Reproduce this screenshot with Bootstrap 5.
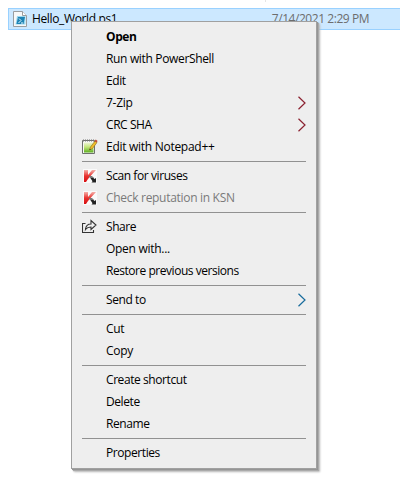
<!DOCTYPE html>
<html lang="en">
<head>
<meta charset="utf-8">
<title>File context menu</title>
<link href="https://cdn.jsdelivr.net/npm/bootstrap@5.3.0/dist/css/bootstrap.min.css" rel="stylesheet">
<style>
body{width:400px;height:492px;overflow:hidden;background:#fff;font:12px/22px "Open Sans","Noto Sans",sans-serif;color:#000}
.column-tick{width:1px;height:2px;background:#e5e5e5;margin-left:265px}
.file-row{height:22px;margin:6px 0 0 8px;background:#cce8ff;border:1px solid #99d1ff;border-right:0;padding-left:4px;line-height:20px}
.file-name{margin-left:5px;letter-spacing:-.36px}
.file-date{margin-right:31px;color:#6d6d6d;letter-spacing:-.45px}
.context-menu{left:71px;top:21px;width:246px;height:448px;padding:4px 10px;margin:0;background:#eee;border:1px solid #a0a0a0;border-radius:0;box-shadow:1px 1px 0 #959595,2px 2px 1px #aaa,3px 3px 2px #bbb;font-size:12px;color:#000;min-width:0}
.menu-row{height:22px}
.icon-slot{width:24px;height:22px;flex:none}
.icon-slot svg{display:block;margin-top:3px}
.menu-line{height:1px;margin:3px 0;background:#919191}
.label-text{letter-spacing:-.42px;white-space:nowrap}
.fit-normal{letter-spacing:-.34px}
.fit-snug{letter-spacing:-.46px}
.fit-wide{letter-spacing:-.28px}
.off{color:#7a7a7a;letter-spacing:-.3px}
.arrow{margin-right:0}
</style>
<script src="https://cdn.jsdelivr.net/npm/bootstrap@5.3.0/dist/js/bootstrap.bundle.min.js"></script>
</head>
<body>
<svg width="0" height="0" class="position-absolute">
<defs><linearGradient id="red" x2="0" y2="1"><stop stop-color="#f5b0aa"/><stop offset=".5" stop-color="#e8312e"/><stop offset="1" stop-color="#d80f12"/></linearGradient>
<linearGradient id="green" x2="0" y2="1"><stop stop-color="#eef6d8"/><stop offset=".45" stop-color="#c4e67a"/><stop offset="1" stop-color="#5cae20"/></linearGradient></defs>
<symbol id="shield" viewBox="0 0 16 16"><path fill="#fafafa" d="M1 1h14v14H1z"/><path fill="url(#red)" d="M2 2h4v5l4-5h4L8.500 8 6 11l-2 3H2z"/><path fill="#222" d="M8 9.500h3l1.500 1.500L14 10v4.500H9.500l1-1.200L9 11z"/><path fill="#777" d="M6.500 8h3.500l2 2H8z"/></symbol>
<symbol id="chev" viewBox="0 0 9 14"><path d="M1.500 .8L8 7 1.500 13.200" fill="none" stroke="currentColor" stroke-width="1.200"/></symbol>
</svg>
<div class="column-tick"></div>
<div class="file-row d-flex align-items-center">
<svg width="14" height="16" viewBox="0 0 14 16"><path d="M.5.5h9l4 4v11H.5z" fill="#f7f8f8" stroke="#9a9d9f"/><path d="M9.500.5v4h4" fill="#fff" stroke="#9a9d9f"/><path d="M4 5h8.500v8.500H2.500z" fill="#9cd7ef"/><path d="M5 6h7l-1.500 7H3.500z" fill="#1f84b4"/><path d="M6 7.500l2 2L5.500 12M8 12h2" fill="none" stroke="#e5f7ff"/></svg>
<span class="file-name">Hello_World.ps1</span><span class="file-date ms-auto">7/14/2021 2:29 PM</span>
</div>
<div class="context-menu dropdown-menu show position-absolute">
<div class="menu-row d-flex"><span class="icon-slot"></span><span class="label-text fw-bold">Open</span></div>
<div class="menu-row d-flex"><span class="icon-slot"></span><span class="label-text fit-normal">Run with PowerShell</span></div>
<div class="menu-row d-flex"><span class="icon-slot"></span><span class="label-text">Edit</span></div>
<div class="menu-row d-flex align-items-center"><span class="icon-slot"></span><span class="label-text fit-wide">7-Zip</span><svg class="arrow ms-auto" width="9" height="14" color="#8b2130"><use href="#chev"/></svg></div>
<div class="menu-row d-flex align-items-center"><span class="icon-slot"></span><span class="label-text">CRC SHA</span><svg class="arrow ms-auto" width="9" height="14" color="#8b2130"><use href="#chev"/></svg></div>
<div class="menu-row d-flex"><span class="icon-slot"><svg width="16" height="16" viewBox="0 0 16 16"><path d="M.5 1.500h12v13H.5z" fill="#f8f8f5" stroke="#6e706c"/><path d="M2 3.500h9.500v10H2z" fill="url(#green)"/><path d="M1 1.500h11" stroke="#777" stroke-width="2" stroke-dasharray="1 1"/><path d="M7.500 11l1-3 4.500-6 2 1.500-4.500 6z" fill="#efbd28" stroke="#8c6a24" stroke-width=".6"/><path d="M12.500 2l1.200-1.500 2 1.500-1.200 1.500z" fill="#c34c35"/><path d="M7.500 11l.4-1.300 1 .7z" fill="#222"/></svg></span><span class="label-text fit-wide">Edit with Notepad++</span></div>
<div class="menu-line"></div>
<div class="menu-row d-flex"><span class="icon-slot"><svg width="16" height="16"><use href="#shield"/></svg></span><span class="label-text">Scan for viruses</span></div>
<div class="menu-row d-flex"><span class="icon-slot"><svg width="16" height="16"><use href="#shield"/></svg></span><span class="label-text off">Check reputation in KSN</span></div>
<div class="menu-line"></div>
<div class="menu-row d-flex"><span class="icon-slot"><svg width="16" height="16" viewBox="0 0 16 16" fill="none" stroke="#333" stroke-width="1.100"><path d="M3.500 4.500h-3v9h11V11"/><path d="M3.500 10.500c.4-4 2.500-5.500 5.500-5.500V1.500L14 6 9 10.500V8C6.500 8 5 8.500 3.500 10.500z"/></svg></span><span class="label-text">Share</span></div>
<div class="menu-row d-flex"><span class="icon-slot"></span><span class="label-text fit-wide">Open with...</span></div>
<div class="menu-row d-flex"><span class="icon-slot"></span><span class="label-text fit-snug">Restore previous versions</span></div>
<div class="menu-line"></div>
<div class="menu-row d-flex align-items-center"><span class="icon-slot"></span><span class="label-text">Send to</span><svg class="arrow ms-auto" width="9" height="14" color="#176b9c"><use href="#chev"/></svg></div>
<div class="menu-line"></div>
<div class="menu-row d-flex"><span class="icon-slot"></span><span class="label-text fit-wide">Cut</span></div>
<div class="menu-row d-flex"><span class="icon-slot"></span><span class="label-text fit-wide">Copy</span></div>
<div class="menu-line"></div>
<div class="menu-row d-flex"><span class="icon-slot"></span><span class="label-text">Create shortcut</span></div>
<div class="menu-row d-flex"><span class="icon-slot"></span><span class="label-text">Delete</span></div>
<div class="menu-row d-flex"><span class="icon-slot"></span><span class="label-text">Rename</span></div>
<div class="menu-line"></div>
<div class="menu-row d-flex"><span class="icon-slot"></span><span class="label-text">Properties</span></div>
</div>
</body>
</html>
